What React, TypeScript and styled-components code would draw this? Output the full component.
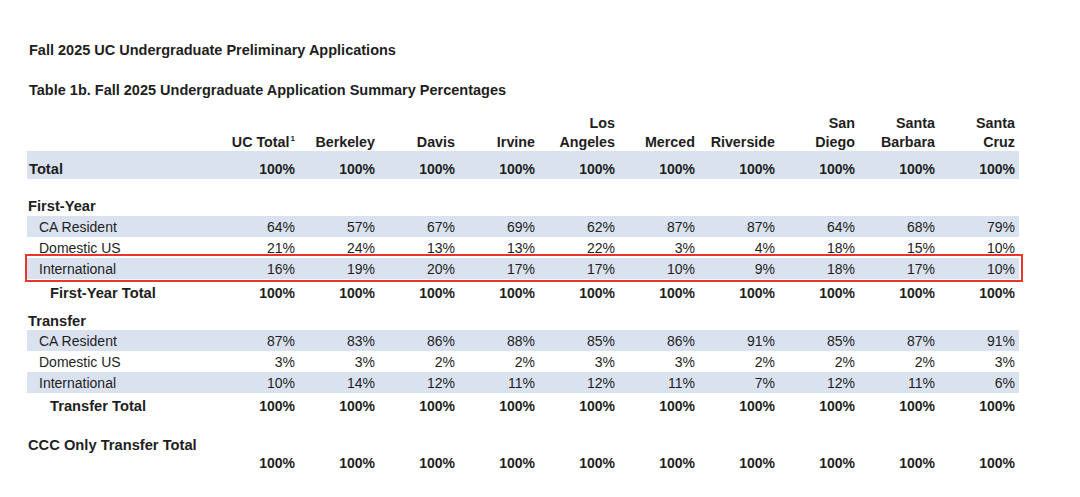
import React from "react";
import styled, { createGlobalStyle } from "styled-components";

const GlobalStyle = createGlobalStyle`
  html, body { margin: 0; padding: 0; background: #ffffff; }
  body { font-family: "Liberation Sans", Arial, sans-serif; color: #1e1e1e; }
  * { box-sizing: border-box; }
`;

const Page = styled.div`
  width: 1080px;
  height: 497px;
  padding: 40px 0 0 27px;
  overflow: hidden;
`;

const Title = styled.div<{ $mb: number }>`
  font-size: 14.5px;
  font-weight: 700;
  line-height: 20px;
  padding-left: 2px;
  margin-bottom: ${(p) => p.$mb}px;
`;

const Table = styled.div`
  width: 992px;
  font-size: 14px;
`;

const Row = styled.div<{ $h: number; $pt: number; $band?: boolean; $bold?: boolean; $lh?: number }>`
  position: relative;
  display: grid;
  grid-template-columns: 192px repeat(10, 80px);
  height: ${(p) => p.$h}px;
  padding-top: ${(p) => p.$pt}px;
  line-height: ${(p) => p.$lh ?? 19}px;
  background: ${(p) => (p.$band ? "#dae2f0" : "transparent")};
  font-weight: ${(p) => (p.$bold ? 700 : 400)};
  white-space: nowrap;
`;

const HeaderRow = styled.div`
  display: grid;
  grid-template-columns: 192px repeat(10, 80px);
  height: 37px;
  line-height: 18.5px;
  font-weight: 700;
  align-items: end;
`;

const HeaderCell = styled.div`
  text-align: right;
  padding-right: 4px;
  white-space: nowrap;
  font-size: 14.3px;
`;

const Sup = styled.sup`
  font-size: 8px;
  line-height: 0;
  vertical-align: 6px;
  margin-left: 1px;
`;

const Label = styled.div<{ $indent: number; $bold?: boolean; $wide?: boolean }>`
  padding-left: ${(p) => p.$indent}px;
  font-weight: ${(p) => (p.$bold ? 700 : "inherit")};
  font-size: ${(p) => (p.$wide ? "14.7px" : "14px")};
`;

const Cell = styled.div`
  text-align: right;
  padding-right: 4px;
`;

const Highlight = styled.div`
  position: absolute;
  left: -2px;
  right: -4px;
  top: -4px;
  bottom: -3px;
  border: 2px solid #e8342c;
  pointer-events: none;
`;

const campuses: React.ReactNode[] = [
  <>UC Total<Sup>1</Sup></>,
  "Berkeley",
  "Davis",
  "Irvine",
  <>Los<br />Angeles</>,
  "Merced",
  "Riverside",
  <>San<br />Diego</>,
  <>Santa<br />Barbara</>,
  <>Santa<br />Cruz</>,
];

const full = Array(10).fill("100%");

type RowSpec = {
  label?: string;
  indent: number;
  labelBold?: boolean;
  bold?: boolean;
  band?: boolean;
  values?: string[];
  h: number;
  pt: number;
  lh?: number;
  highlight?: boolean;
};

const rows: RowSpec[] = [
  { label: "Total", indent: 2, bold: true, band: true, values: full, h: 28, pt: 8, lh: 20 },
  { label: "First-Year", indent: 1, labelBold: true, h: 37, pt: 18 },
  { label: "CA Resident", indent: 12, band: true, values: ["64%", "57%", "67%", "69%", "62%", "87%", "87%", "64%", "68%", "79%"], h: 21, pt: 2 },
  { label: "Domestic US", indent: 12, values: ["21%", "24%", "13%", "13%", "22%", "3%", "4%", "18%", "15%", "10%"], h: 21, pt: 2 },
  { label: "International", indent: 12, band: true, highlight: true, values: ["16%", "19%", "20%", "17%", "17%", "10%", "9%", "18%", "17%", "10%"], h: 21, pt: 2 },
  { label: "First-Year Total", indent: 23, bold: true, values: full, h: 24, pt: 4, lh: 20 },
  { label: "Transfer", indent: 1, labelBold: true, h: 27, pt: 9 },
  { label: "CA Resident", indent: 12, band: true, values: ["87%", "83%", "86%", "88%", "85%", "86%", "91%", "85%", "87%", "91%"], h: 21, pt: 2 },
  { label: "Domestic US", indent: 12, values: ["3%", "3%", "2%", "2%", "3%", "3%", "2%", "2%", "2%", "3%"], h: 21, pt: 2 },
  { label: "International", indent: 12, band: true, values: ["10%", "14%", "12%", "11%", "12%", "11%", "7%", "12%", "11%", "6%"], h: 21, pt: 2 },
  { label: "Transfer Total", indent: 23, bold: true, values: full, h: 23, pt: 3, lh: 20 },
  { label: "CCC Only Transfer Total", indent: 1, labelBold: true, h: 39, pt: 19, lh: 20 },
  { label: "", indent: 1, bold: true, values: full, h: 20, pt: 0, lh: 16 },
];

export default function App() {
  return (
    <>
      <GlobalStyle />
      <Page>
        <Title $mb={20}>Fall 2025 UC Undergraduate Preliminary Applications</Title>
        <Title $mb={14}>Table 1b. Fall 2025 Undergraduate Application Summary Percentages</Title>
        <Table>
          <HeaderRow>
            <div />
            {campuses.map((c, i) => (
              <HeaderCell key={i}>{c}</HeaderCell>
            ))}
          </HeaderRow>
          {rows.map((r, i) => (
            <Row key={i} $h={r.h} $pt={r.pt} $lh={r.lh} $band={r.band} $bold={r.bold}>
              <Label $indent={r.indent} $bold={r.labelBold} $wide={r.labelBold || r.bold}>
                {r.label}
              </Label>
              {(r.values ?? []).map((v, j) => (
                <Cell key={j}>{v}</Cell>
              ))}
              {r.highlight && <Highlight />}
            </Row>
          ))}
        </Table>
      </Page>
    </>
  );
}
